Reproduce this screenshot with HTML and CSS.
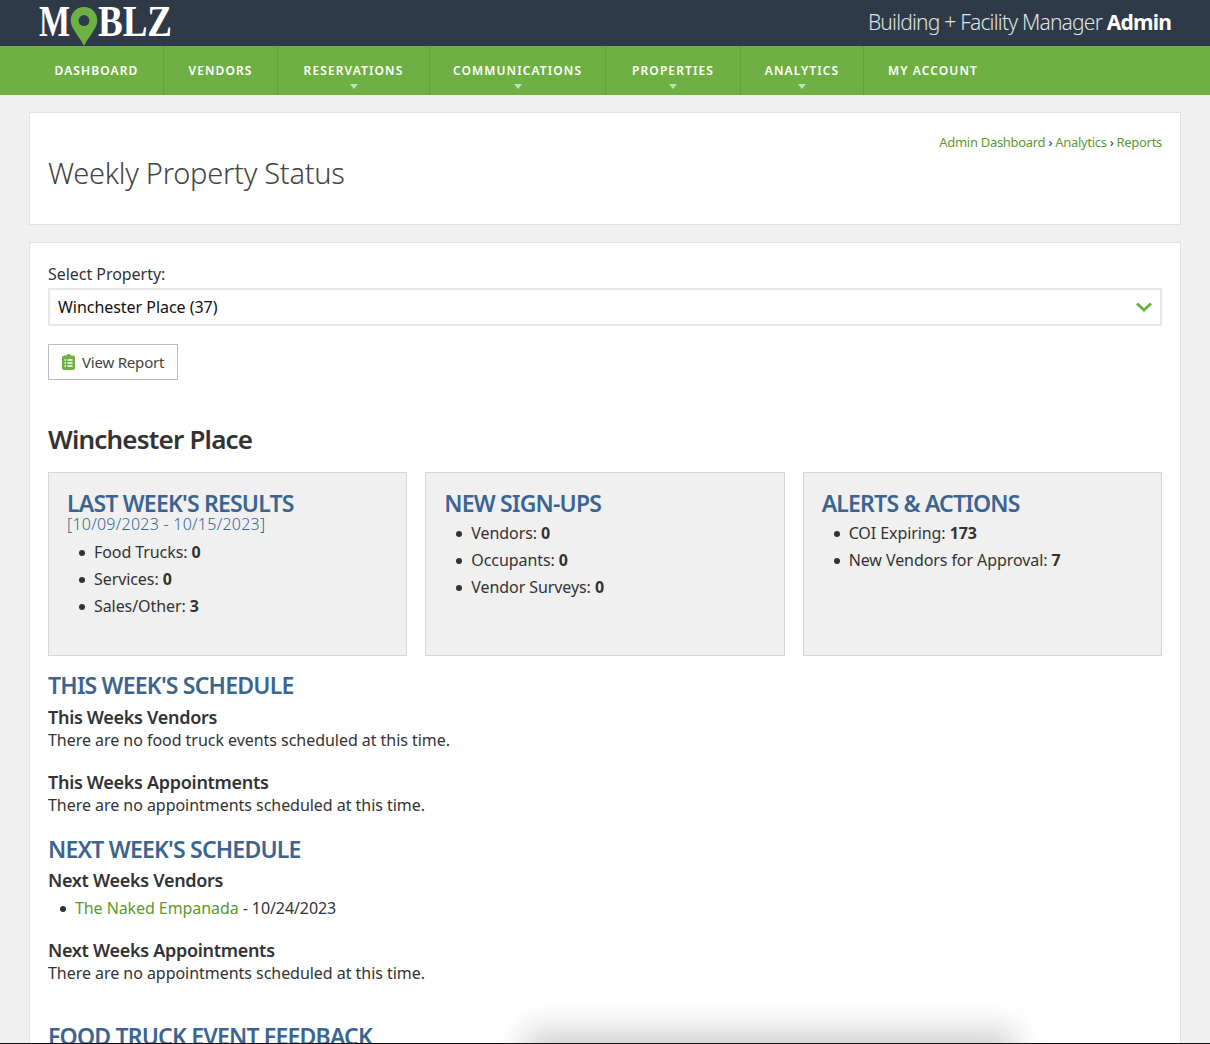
FILE: index.html
```html
<!doctype html>
<html lang="en">
<head>
	<meta charset="UTF-8">
	<title>Weekly Property Status</title>
	<link rel="stylesheet" href="styles.css">
</head>
<body>
	<header class="top">
		<svg class="logo" width="135" height="46" viewBox="0 0 135 46">
			<text class="logo-text" x="0" y="36" textLength="31" lengthAdjust="spacingAndGlyphs">M</text>
			<path fill="#6eb043" fill-rule="evenodd" transform="translate(31 7) scale(.933 .951)" d="M15 0C6.600 0 .8 6.400.8 14c0 5.500 3 9.500 6.200 14.500 3.200 4.500 6 8.500 8 12.500 2-4 4.800-8 8-12.500 3.200-5 6.200-9 6.200-14.500C29.200 6.400 23.400 0 15 0zm0 8.500a5.800 5.800 0 1 1 0 11.600 5.800 5.800 0 0 1 0-11.600z"/>
			<text class="logo-text" x="59" y="36" textLength="74" lengthAdjust="spacingAndGlyphs">BLZ</text>
		</svg>
		<div class="role">Building + Facility Manager <b>Admin</b></div>
	</header>
	<nav class="nav">
		<a class="nav-item">DASHBOARD</a>
		<a class="nav-item">VENDORS</a>
		<a class="nav-item has-sub">RESERVATIONS</a>
		<a class="nav-item has-sub">COMMUNICATIONS</a>
		<a class="nav-item has-sub">PROPERTIES</a>
		<a class="nav-item has-sub">ANALYTICS</a>
		<a class="nav-item last">MY ACCOUNT</a>
	</nav>
	<main class="wrap">
		<section class="panel title-panel">
			<div class="crumbs"><a>Admin Dashboard</a> › <a>Analytics</a> › <a>Reports</a></div>
			<h1>Weekly Property Status</h1>
		</section>
		<section class="panel body-panel">
			<label class="field-label">Select Property:</label>
			<div class="select">
				<span>Winchester Place (37)</span>
				<svg width="18" height="12" viewBox="0 0 18 12"><path fill="none" stroke="#6eb043" stroke-width="3" d="M2 2.500l7 6.500 7-6.500"/></svg>
			</div>
			<button class="btn">
				<svg width="13" height="16" viewBox="0 0 13 16"><path fill="#6eb043" d="M4.500 1.500C4.500.6 5.300 0 6.500 0s2 .6 2 1.500H11c1.100 0 2 .9 2 2V14c0 1.100-.9 2-2 2H2c-1.100 0-2-.9-2-2V3.500c0-1.100.9-2 2-2z"/><path stroke="#fff" stroke-width="1.300" d="M2.500 6h1.500M5.500 6h5M2.500 9h1.500M5.500 9h5M2.500 12h1.500M5.500 12h5"/></svg>
				View Report
			</button>
			<h2 class="place">Winchester Place</h2>
			<div class="cards">
				<div class="card">
					<h3>LAST WEEK'S RESULTS</h3>
					<div class="dates">[10/09/2023 - 10/15/2023]</div>
					<ul>
						<li>Food Trucks: <b>0</b></li>
						<li>Services: <b>0</b></li>
						<li>Sales/Other: <b>3</b></li>
					</ul>
				</div>
				<div class="card">
					<h3>NEW SIGN-UPS</h3>
					<ul>
						<li>Vendors: <b>0</b></li>
						<li>Occupants: <b>0</b></li>
						<li>Vendor Surveys: <b>0</b></li>
					</ul>
				</div>
				<div class="card">
					<h3>ALERTS &amp; ACTIONS</h3>
					<ul>
						<li>COI Expiring: <b>173</b></li>
						<li>New Vendors for Approval: <b>7</b></li>
					</ul>
				</div>
			</div>
			<h3 class="sched">THIS WEEK'S SCHEDULE</h3>
			<h4>This Weeks Vendors</h4>
			<p>There are no food truck events scheduled at this time.</p>
			<h4 class="next-block">This Weeks Appointments</h4>
			<p>There are no appointments scheduled at this time.</p>
			<h3 class="sched second">NEXT WEEK'S SCHEDULE</h3>
			<h4>Next Weeks Vendors</h4>
			<ul class="events">
				<li><a>The Naked Empanada</a> - 10/24/2023</li>
			</ul>
			<h4 class="next-block">Next Weeks Appointments</h4>
			<p>There are no appointments scheduled at this time.</p>
			<h3 class="sched third">FOOD TRUCK EVENT FEEDBACK</h3>
		</section>
	</main>
	<div class="shadow"></div>
	<div class="edge"></div>
</body>
</html>
```

FILE: styles.css
```css
* {
	margin: 0;
	padding: 0;
	box-sizing: border-box;
}
html, body {
	height: 1044px;
	overflow: hidden;
}
body {
	position: relative;
	background: #f0f0f0;
	color: #333;
	font-family: "Noto Sans", "Liberation Sans", sans-serif;
	font-size: 16px;
	letter-spacing: -0.04px;
}
.top {
	height: 46px;
	background: #2e3a48;
	display: flex;
	justify-content: space-between;
	padding: 0 39px;
}
.logo {
	flex: none;
}
.logo-text {
	fill: #fff;
	font-family: "Liberation Serif", serif;
	font-weight: bold;
	font-size: 44px;
}
.role {
	color: #dfe2e5;
	font-size: 21px;
	font-weight: 300;
	line-height: 45px;
	letter-spacing: -0.8px;
}
.role b {
	color: #fff;
	font-weight: 700;
}
.nav {
	height: 49px;
	background: #6eb043;
	display: grid;
	grid-template-columns: 134px 114px 152px 176px 135px 123px 138px;
	grid-template-rows: 49px;
	padding-left: 30px;
}
.nav-item {
	position: relative;
	border-right: 1px solid #62a03a;
	color: #fff;
	font-size: 12px;
	font-weight: 600;
	line-height: 49px;
	letter-spacing: 1.1px;
	text-align: center;
}
.nav-item.last {
	border-right: 0;
}
.has-sub::after {
	content: "";
	position: absolute;
	left: 50%;
	bottom: 6px;
	margin-left: -4px;
	border: 4px solid transparent;
	border-bottom: 0;
	border-top: 5px solid #c5dfb4;
}
.wrap {
	padding: 17px 29px 0;
}
.panel {
	background: #fff;
	border: 1px solid #e2e2e2;
}
.title-panel {
	height: 113px;
	padding: 21px 18px 0;
	margin-bottom: 17px;
}
.crumbs {
	text-align: right;
	font-size: 13px;
	line-height: 16px;
	color: #333;
	letter-spacing: -0.3px;
}
.crumbs a, .events a {
	color: #5b9a2f;
}
h1 {
	margin-top: 3px;
	font-size: 29px;
	font-weight: 300;
	line-height: 40px;
	color: #444;
	letter-spacing: -0.27px;
}
.body-panel {
	height: 900px;
	padding: 20px 18px 0;
}
.field-label {
	display: block;
	line-height: 22px;
}
.select {
	height: 38px;
	margin-top: 3px;
	border: 2px solid #e8e8e8;
	padding: 0 7px 0 8px;
	display: flex;
	align-items: center;
	justify-content: space-between;
	color: #111;
}
.btn {
	display: flex;
	align-items: center;
	gap: 7px;
	height: 36px;
	margin-top: 18px;
	padding: 0 13px;
	background: #fff;
	border: 1px solid #bbb;
	color: #444;
	font: inherit;
	font-size: 15px;
	letter-spacing: -0.2px;
}
.place {
	margin-top: 41px;
	font-size: 26px;
	font-weight: 600;
	line-height: 36px;
	color: #333;
	letter-spacing: -0.8px;
}
.cards {
	display: grid;
	grid-template-columns: repeat(3, 1fr);
	gap: 18px;
	margin-top: 15px;
}
.card {
	height: 184px;
	background: #f0f0f0;
	border: 1px solid #d6d6d6;
	padding: 18px 18px 0;
}
.card h3, .sched {
	color: #3b6590;
	font-size: 23px;
	font-weight: 600;
	line-height: 30px;
	letter-spacing: -0.8px;
}
.card h3 {
	line-height: 24px;
}
.dates {
	color: #3b6590;
	font-weight: 300;
	line-height: 19px;
	letter-spacing: 0.25px;
	margin-bottom: 5px;
}
.card ul, .events {
	list-style: none;
	margin-top: 5px;
	padding-left: 27px;
}
.events {
	margin-top: 3px;
}
.card li, .events li {
	position: relative;
	line-height: 27px;
	letter-spacing: -0.08px;
}
.card li::before, .events li::before {
	content: "";
	position: absolute;
	left: -15px;
	top: 11px;
	width: 6px;
	height: 6px;
	border-radius: 50%;
	background: #333;
}
.sched {
	margin-top: 14px;
}
h4 {
	margin-top: 5px;
	font-size: 18px;
	font-weight: 600;
	line-height: 24px;
	letter-spacing: -0.3px;
}
p {
	line-height: 22px;
}
h4.next-block {
	margin-top: 19px;
}
.events + h4.next-block {
	margin-top: 16px;
}
.sched.second {
	margin-top: 18px;
	margin-bottom: -1px;
}
.third {
	margin-top: 37px;
}
.shadow {
	position: absolute;
	left: 525px;
	top: 1030px;
	width: 490px;
	height: 50px;
	background: #d0d0d0;
	filter: blur(16px);
}
.edge {
	position: absolute;
	left: 0;
	right: 0;
	top: 1043px;
	height: 1px;
	background: #111;
}
```
